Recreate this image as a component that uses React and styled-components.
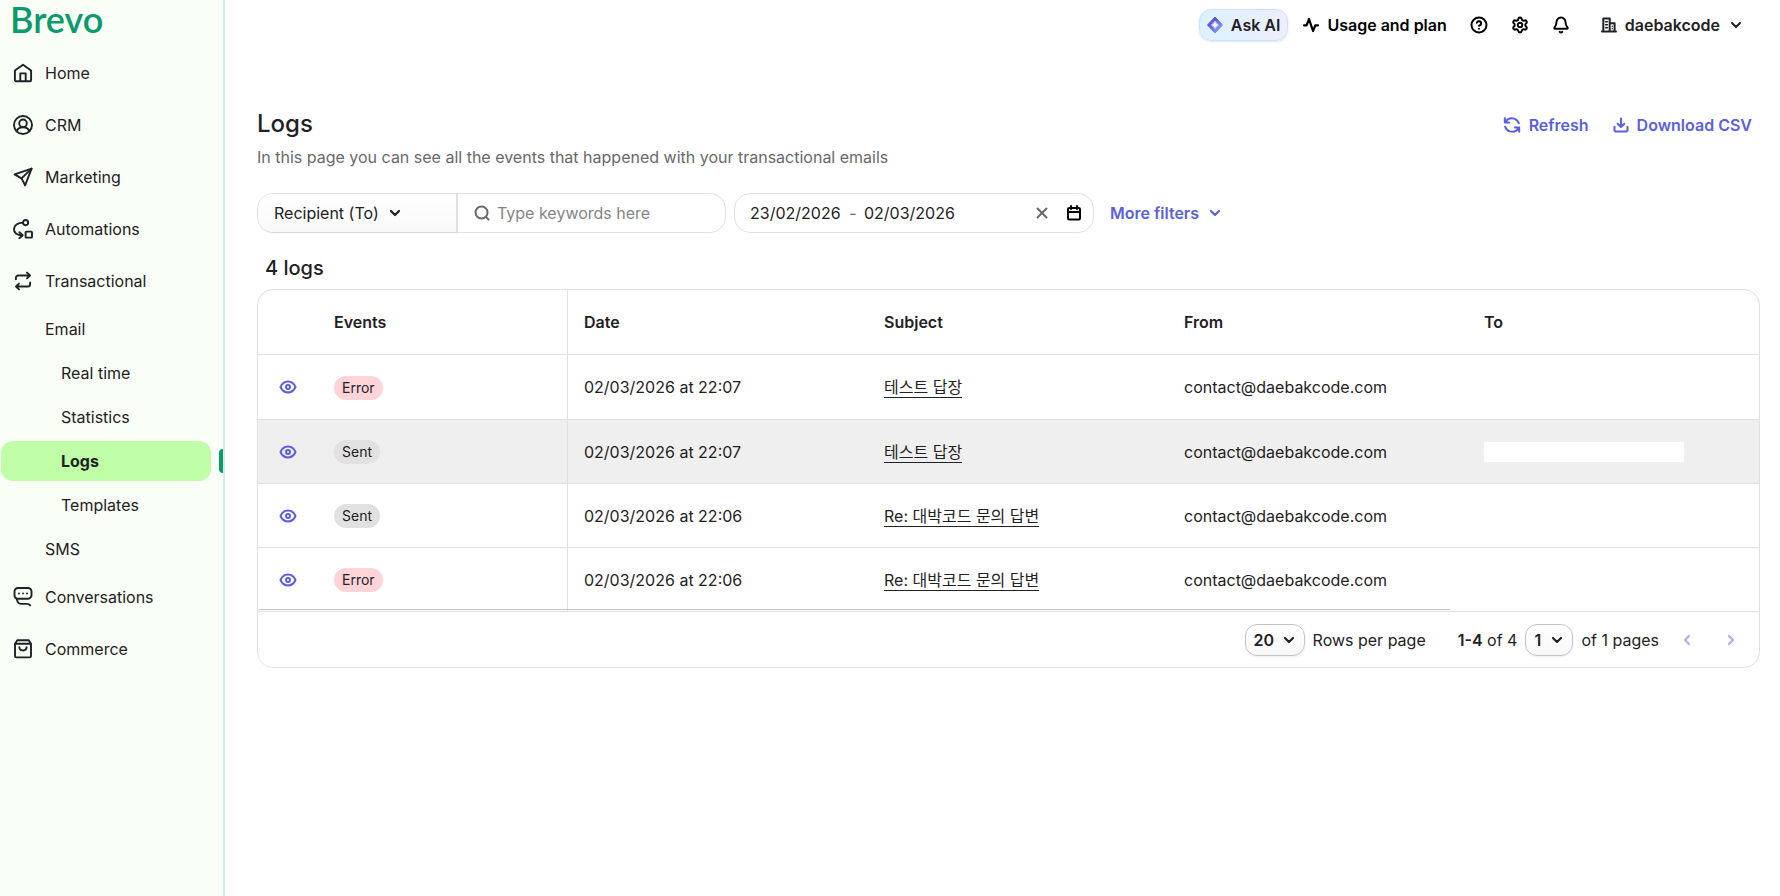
import React, { useState } from "react";
import styled, { createGlobalStyle, css } from "styled-components";
import { Bell, CircleHelp, Settings } from "lucide-react";

const GlobalStyle = createGlobalStyle`
  *, *::before, *::after {
    box-sizing: border-box;
  }
  body {
    margin: 0;
    background: #ffffff;
    color: #1f2124;
    font-family: "Inter", "Noto Sans CJK KR", sans-serif;
    font-size: 16px;
    line-height: 24px;
  }
  button, input, select {
    font: inherit;
    color: inherit;
  }
  svg {
    display: block;
    flex-shrink: 0;
  }
`;

/* ---------- icons ---------- */

const Stroke = ({ children, size = 20, width = 1.9 }) => (
  <svg
    width={size}
    height={size}
    viewBox={`0 0 ${size} ${size}`}
    fill="none"
    stroke="currentColor"
    strokeWidth={width}
    strokeLinecap="round"
    strokeLinejoin="round"
    aria-hidden="true"
  >
    {children}
  </svg>
);

const HomeIcon = () => (
  <Stroke>
    <path d="M1.9 7.6 10 1.8l8.1 5.8v9.3a1.3 1.3 0 0 1-1.3 1.3H3.2a1.3 1.3 0 0 1-1.3-1.3z" />
    <path d="M7.3 18v-7.6h5.4V18" />
  </Stroke>
);

const CrmIcon = () => (
  <Stroke>
    <circle cx="10" cy="10" r="9" />
    <circle cx="10" cy="8.3" r="3.8" />
    <path d="M3.6 16.2c1-2.6 3.4-4 6.4-4s5.4 1.4 6.4 4" />
  </Stroke>
);

const MarketingIcon = () => (
  <Stroke>
    <path d="M18.6 1.6 1.6 7.4l6.9 4 3.6 6.9z" />
    <path d="M18.6 1.6 8.5 11.4" />
  </Stroke>
);

const AutomationIcon = () => (
  <Stroke>
    <circle cx="12.6" cy="3.6" r="2.6" />
    <path d="M10 3.6C4.6 3.6 1 6.3 1 10.2c0 3.7 3.2 6 8.4 6" />
    <path d="m6.4 13.2 3.2 3-3.2 3" />
    <rect x="12.6" y="12.6" width="6.4" height="6" rx="0.6" />
  </Stroke>
);

const TransactionalIcon = () => (
  <Stroke>
    <path d="M2.9 8.2V6.8a2.3 2.3 0 0 1 2.3-2.3h11.6M14 1.6l3 2.9-3 2.9" />
    <path d="M17.1 11.4v1.8a2.3 2.3 0 0 1-2.3 2.3H3.2M6 12.6l-3 2.9 3 2.9" />
  </Stroke>
);

const ConversationIcon = () => (
  <Stroke>
    <path d="M5 1h10a3.5 3.5 0 0 1 3.5 3.5v3.7a3.5 3.5 0 0 1-3.5 3.5H5a3.5 3.5 0 0 1-3.5-3.5V4.5A3.5 3.5 0 0 1 5 1z" />
    <path d="M2.6 10.8c1.8.8 1.4 2.8 2.2 4.3.7 1.3 1.9 1.8 3.4 1.8h5.6c1.6 0 2.6.4 3.4 1.4" />
    <path d="M6 6.5h.01M10 6.5h.01M14 6.5h.01" />
  </Stroke>
);

const CommerceIcon = () => (
  <Stroke>
    <path d="M2 4.9 4.2 1.3h11.6L18 4.9v12a1.5 1.5 0 0 1-1.5 1.5h-13A1.5 1.5 0 0 1 2 16.9z" />
    <path d="M2.3 4.7h15.4M6.4 8.3c0 4.2 7.2 4.2 7.2 0" />
  </Stroke>
);

const PulseIcon = () => (
  <Stroke size={16} width={2.2}>
    <path d="M1 8.3h2.6L6 2l4 12 2.3-5.7H15" />
  </Stroke>
);

const BuildingIcon = () => (
  <Stroke size={16} width={2}>
    <path d="M1 14.5h14M2.3 14.5v-13h6.4v13M8.7 6.2h4.9v8.3" />
    <path d="M4.5 4.7h2M4.5 7.7h2M4.5 10.7h2M11.2 9.2v.01M11.2 11.7v.01" strokeWidth="1.4" />
  </Stroke>
);

const DiamondIcon = () => (
  <svg width="16" height="18" viewBox="0 0 16 18" aria-hidden="true">
    <defs>
      <linearGradient id="spark" x1="0" y1="0" x2="1" y2="1">
        <stop offset="0.3" stopColor="#5a54d6" />
        <stop offset="1" stopColor="#86b6fa" />
      </linearGradient>
    </defs>
    <path d="M8 1 15.5 9 8 17 .5 9z" fill="url(#spark)" stroke="url(#spark)" strokeLinejoin="round" />
    <path d="M8 4.6 12.2 9 8 13.4 3.8 9z" fill="#b9b6f5" />
    <path d="M8 6Q8.8 8.2 11 9 8.8 9.8 8 12 7.2 9.8 5 9 7.2 8.2 8 6z" fill="#ffffff" />
  </svg>
);

const Chevron = ({ width = 2.2 }) => (
  <Stroke size={12} width={width}>
    <path d="m2 4 4 4 4-4" />
  </Stroke>
);

const RefreshIcon = () => (
  <Stroke size={18} width={2}>
    <path d="M1.8 2.3v4.3h4.3M2.1 6.3C4 3.1 7.5 1.7 11 2.6c2.3.7 4 2.3 4.8 4.6" />
    <path d="M16.2 15.7v-4.3h-4.3M15.9 11.7c-1.9 3.2-5.4 4.6-8.9 3.7-2.3-.7-4-2.3-4.8-4.6" />
  </Stroke>
);

const DownloadIcon = () => (
  <Stroke size={16} width={2}>
    <path d="M8 1.5v8.3M4.7 6.7 8 10l3.3-3.3" />
    <path d="M1.5 9.8v3.4a1.3 1.3 0 0 0 1.3 1.3h10.4a1.3 1.3 0 0 0 1.3-1.3V9.8" />
  </Stroke>
);

const SearchIcon = () => (
  <Stroke size={16} width={2}>
    <circle cx="7.5" cy="7.5" r="6" />
    <path d="m12 12 2.6 2.6" />
  </Stroke>
);

const CloseIcon = () => (
  <Stroke size={12} width={2}>
    <path d="m1.5 1.5 9 9M10.5 1.5l-9 9" />
  </Stroke>
);

const CalendarIcon = () => (
  <Stroke size={16} width={2}>
    <rect x="2" y="3" width="12" height="11.5" rx="1.3" />
    <path d="M2 7h12M5 1v3M11 1v3" />
  </Stroke>
);

const EyeIcon = () => (
  <Stroke size={18} width={2}>
    <path d="M1.5 9C3 5.5 5.7 3.6 9 3.6S15 5.5 16.5 9C15 12.5 12.3 14.4 9 14.4S3 12.5 1.5 9z" />
    <circle cx="9" cy="9" r="2" />
  </Stroke>
);

const PageArrow = ({ next }) => (
  <Stroke size={12} width={2.2}>
    <path d={next ? "m4 2 4 4-4 4" : "M8 2 4 6l4 4"} />
  </Stroke>
);

/* ---------- data ---------- */

const NAV = [
  { label: "Home", icon: HomeIcon },
  { label: "CRM", icon: CrmIcon },
  { label: "Marketing", icon: MarketingIcon },
  { label: "Automations", icon: AutomationIcon },
  {
    label: "Transactional",
    icon: TransactionalIcon,
    children: [
      { label: "Email", level: 1 },
      { label: "Real time", level: 2 },
      { label: "Statistics", level: 2 },
      { label: "Logs", level: 2, active: true },
      { label: "Templates", level: 2 },
      { label: "SMS", level: 1 },
    ],
  },
  { label: "Conversations", icon: ConversationIcon },
  { label: "Commerce", icon: CommerceIcon },
];

const LOGS = [
  { id: 1, event: "Error", date: "02/03/2026 at 22:07", subject: "테스트 답장", from: "contact@daebakcode.com" },
  { id: 2, event: "Sent", date: "02/03/2026 at 22:07", subject: "테스트 답장", from: "contact@daebakcode.com", masked: true },
  { id: 3, event: "Sent", date: "02/03/2026 at 22:06", subject: "Re: 대박코드 문의 답변", from: "contact@daebakcode.com" },
  { id: 4, event: "Error", date: "02/03/2026 at 22:06", subject: "Re: 대박코드 문의 답변", from: "contact@daebakcode.com" },
];

/* ---------- page ---------- */

const Sidebar = () => (
  <Side>
    <Logo href="#home">Brevo</Logo>
    <nav aria-label="Main">
      <NavList>
        {NAV.map(({ label, icon: Icon, children }) => (
          <li key={label}>
            <NavLink href="#nav">
              <Icon />
              {label}
            </NavLink>
            {children && (
              <NavList>
                {children.map((item) => (
                  <SubItem key={item.label} $active={item.active}>
                    <SubLink
                      href="#nav"
                      $level={item.level}
                      $active={item.active}
                      aria-current={item.active ? "page" : undefined}
                    >
                      {item.label}
                    </SubLink>
                  </SubItem>
                ))}
              </NavList>
            )}
          </li>
        ))}
      </NavList>
    </nav>
  </Side>
);

const Header = () => (
  <Topbar>
    <AskButton type="button">
      <DiamondIcon />
      Ask AI
    </AskButton>
    <UsageButton type="button">
      <PulseIcon />
      Usage and plan
    </UsageButton>
    <IconGroup>
      <PlainButton type="button" aria-label="Help">
        <CircleHelp size={18} strokeWidth={2.6} />
      </PlainButton>
      <PlainButton type="button" aria-label="Settings">
        <Settings size={18} strokeWidth={2.6} />
      </PlainButton>
      <PlainButton type="button" aria-label="Notifications">
        <Bell size={18} strokeWidth={2.6} />
      </PlainButton>
    </IconGroup>
    <AccountButton type="button">
      <BuildingIcon />
      daebakcode
      <Chevron width={2} />
    </AccountButton>
  </Topbar>
);

const Filters = () => {
  const [keyword, setKeyword] = useState("");
  const [start, setStart] = useState("23/02/2026");
  const [end, setEnd] = useState("02/03/2026");

  const clearDates = () => {
    setStart("");
    setEnd("");
  };

  return (
    <FilterBar>
      <SearchGroup>
        <FieldButton type="button">
          Recipient (To)
          <Chevron />
        </FieldButton>
        <SearchBox>
          <SearchIcon />
          <input
            type="text"
            aria-label="Keywords"
            placeholder="Type keywords here"
            value={keyword}
            onChange={(e) => setKeyword(e.target.value)}
          />
        </SearchBox>
      </SearchGroup>
      <DateBox>
        <DateInput aria-label="Start date" value={start} onChange={(e) => setStart(e.target.value)} />
        <Dash>-</Dash>
        <DateInput aria-label="End date" value={end} onChange={(e) => setEnd(e.target.value)} />
        <DateActions>
          <PlainButton type="button" aria-label="Clear dates" onClick={clearDates} $muted>
            <CloseIcon />
          </PlainButton>
          <PlainButton type="button" aria-label="Open calendar">
            <CalendarIcon />
          </PlainButton>
        </DateActions>
      </DateBox>
      <LinkButton type="button" $gap={10}>
        More filters
        <Chevron />
      </LinkButton>
    </FilterBar>
  );
};

const Pagination = () => {
  const [rows, setRows] = useState("20");
  const [page, setPage] = useState("1");

  return (
    <Pager>
      <SelectBox $width={60}>
        <select id="rows" value={rows} onChange={(e) => setRows(e.target.value)}>
          <option>20</option>
          <option>50</option>
        </select>
        <Chevron />
      </SelectBox>
      <RowsLabel htmlFor="rows">Rows per page</RowsLabel>
      <span>
        <b>1-4</b> of 4
      </span>
      <SelectBox $width={48}>
        <select id="page" value={page} onChange={(e) => setPage(e.target.value)}>
          <option>1</option>
        </select>
        <Chevron />
      </SelectBox>
      <PageLabel htmlFor="page">of 1 pages</PageLabel>
      <ArrowButton type="button" aria-label="Previous page" disabled>
        <PageArrow />
      </ArrowButton>
      <ArrowButton type="button" aria-label="Next page" disabled>
        <PageArrow next />
      </ArrowButton>
    </Pager>
  );
};

const LogTable = () => (
  <Card>
    <TableWrap>
      <Table>
        <colgroup>
          <col width="60" />
          <col width="250" />
          <col width="300" />
          <col width="300" />
          <col width="300" />
          <col />
        </colgroup>
        <thead>
          <tr>
            <th aria-label="Details" />
            <th>Events</th>
            <th>Date</th>
            <th>Subject</th>
            <th>From</th>
            <th>To</th>
          </tr>
        </thead>
        <tbody>
          {LOGS.map((log) => (
            <Row key={log.id} $hovered={log.masked}>
              <td>
                <ViewButton type="button" aria-label="View log">
                  <EyeIcon />
                </ViewButton>
              </td>
              <td>
                <Badge $error={log.event === "Error"}>{log.event}</Badge>
              </td>
              <td>{log.date}</td>
              <td>
                <SubjectLink href="#log">{log.subject}</SubjectLink>
              </td>
              <td>{log.from}</td>
              <td>{log.masked && <Mask />}</td>
            </Row>
          ))}
        </tbody>
      </Table>
      <ScrollThumb />
    </TableWrap>
    <Pagination />
  </Card>
);

const App = () => (
  <>
    <GlobalStyle />
    <Page>
      <Sidebar />
      <Content>
        <Header />
        <Main>
          <TitleRow>
            <div>
              <h1>Logs</h1>
              <p>In this page you can see all the events that happened with your transactional emails</p>
            </div>
            <TitleActions>
              <LinkButton type="button" $gap={8}>
                <RefreshIcon />
                Refresh
              </LinkButton>
              <LinkButton type="button" $gap={8}>
                <DownloadIcon />
                Download CSV
              </LinkButton>
            </TitleActions>
          </TitleRow>
          <Filters />
          <Count>4 logs</Count>
          <LogTable />
        </Main>
      </Content>
    </Page>
  </>
);

/* ---------- styles ---------- */

const Page = styled.div`
  display: flex;
  min-height: 100vh;
`;

const Side = styled.aside`
  width: 225px;
  flex-shrink: 0;
  background: #f9fff6;
  border-right: 2px solid #d5ede5;
`;

const Logo = styled.a`
  display: block;
  height: 47px;
  padding-left: 10px;
  color: #0b996e;
  font-family: "Lato", sans-serif;
  font-size: 36px;
  font-weight: 600;
  line-height: 38px;
  text-decoration: none;
`;

const NavList = styled.ul`
  margin: 0;
  padding: 0;
  list-style: none;
`;

const NavLink = styled.a`
  display: flex;
  align-items: center;
  gap: 12px;
  height: 52px;
  padding-left: 13px;
  color: inherit;
  text-decoration: none;
`;

const SubItem = styled.li`
  display: flex;
  align-items: center;
  justify-content: space-between;
  height: 44px;
  padding-left: 1px;

  ${(p) =>
    p.$active &&
    css`
      &::after {
        content: "";
        width: 4px;
        height: 24px;
        border-radius: 4px 0 0 4px;
        background: #0b996e;
      }
    `}
`;

const SubLink = styled.a`
  display: flex;
  align-items: center;
  width: 210px;
  height: 40px;
  padding-left: ${(p) => (p.$level === 2 ? 60 : 44)}px;
  border-radius: 12px;
  color: inherit;
  text-decoration: none;
  background: ${(p) => (p.$active ? "#c0ffa8" : "transparent")};
  font-weight: ${(p) => (p.$active ? 700 : 400)};
`;

const Content = styled.div`
  flex: 1;
  min-width: 0;
`;

const Topbar = styled.header`
  display: flex;
  align-items: center;
  justify-content: flex-end;
  height: 50px;
  padding-right: 38px;
`;

const PlainButton = styled.button`
  display: flex;
  align-items: center;
  padding: 0;
  border: none;
  background: none;
  cursor: pointer;
  color: ${(p) => (p.$muted ? "#696969" : "#000000")};
`;

const AskButton = styled(PlainButton)`
  gap: 8px;
  height: 32px;
  padding: 0 7px;
  border: 1px solid #cfe0f8;
  border-radius: 12px;
  background: linear-gradient(100deg, #dcf1ff, #eeeefc);
  box-shadow: 0 1px 2px rgba(80, 160, 230, 0.25);
  color: #1f2124;
  font-weight: 600;
`;

const UsageButton = styled(PlainButton)`
  gap: 8px;
  margin-left: 15px;
  font-weight: 600;
`;

const IconGroup = styled.div`
  display: flex;
  gap: 23px;
  margin: 0 31px 0 23px;
`;

const AccountButton = styled(PlainButton)`
  gap: 8px;
  color: #1f2124;
  font-weight: 600;

  svg:last-child {
    margin-left: 2px;
  }
`;

const Main = styled.main`
  padding: 56px 20px 32px 32px;
`;

const TitleRow = styled.div`
  display: flex;
  justify-content: space-between;

  h1 {
    margin: 0;
    font-size: 24px;
    font-weight: 500;
    line-height: 35px;
  }
  p {
    margin: 4px 0 0;
    color: #696969;
  }
`;

const TitleActions = styled.div`
  display: flex;
  align-items: flex-start;
  gap: 24px;
  padding: 7px 8px 0 0;
`;

const LinkButton = styled.button`
  display: flex;
  align-items: center;
  gap: ${(p) => p.$gap}px;
  padding: 0;
  border: none;
  background: none;
  color: #5c5fda;
  font-weight: 600;
  cursor: pointer;
`;

const FilterBar = styled.div`
  display: flex;
  gap: 8px;
  margin-top: 24px;

  > button {
    margin-left: 8px;
  }
`;

const SearchGroup = styled.div`
  display: flex;
  width: 469px;
  height: 40px;
  border: 1px solid #e1e1e1;
  border-radius: 16px;
`;

const FieldButton = styled.button`
  display: flex;
  align-items: center;
  gap: 10px;
  width: 200px;
  padding: 0 16px;
  border: none;
  border-right: 2px solid #e1e1e1;
  border-radius: 15px 0 0 15px;
  background: linear-gradient(#ffffff, #f9f9f9);
  box-shadow: 0 2px 2px rgba(0, 0, 0, 0.04);
  cursor: pointer;
`;

const SearchBox = styled.label`
  display: flex;
  align-items: center;
  gap: 7px;
  flex: 1;
  min-width: 0;
  padding: 0 16px;
  color: #696969;

  input {
    flex: 1;
    min-width: 0;
    padding: 0;
    border: none;
    outline: none;
    background: transparent;
    color: #1f2124;
  }
  input::placeholder {
    color: #858585;
    opacity: 1;
  }
`;

const DateBox = styled.div`
  display: flex;
  align-items: center;
  width: 360px;
  height: 40px;
  padding: 0 11px 0 15px;
  border: 1px solid #e1e1e1;
  border-radius: 16px;
`;

const DateInput = styled.input`
  width: 92px;
  padding: 0;
  border: none;
  outline: none;
  background: transparent;
`;

const Dash = styled.span`
  width: 22px;
  text-align: center;
  color: #696969;
`;

const DateActions = styled.div`
  display: flex;
  align-items: center;
  gap: 18px;
  margin-left: auto;
`;

const Count = styled.h2`
  margin: 20px 0 6px 8px;
  font-size: 20px;
  font-weight: 500;
  line-height: 30px;
`;

const Card = styled.section`
  border: 1px solid #e1e1e1;
  border-radius: 16px;
  overflow: hidden;
`;

const TableWrap = styled.div`
  position: relative;
`;

const Table = styled.table`
  width: 100%;
  table-layout: fixed;
  border-collapse: separate;
  border-spacing: 0;

  th,
  td {
    height: 64px;
    padding: 0 16px;
    border-bottom: 1px solid #e1e1e1;
    text-align: left;
    white-space: nowrap;
  }
  th,
  tbody tr:first-child td {
    height: 65px;
  }
  th {
    font-weight: 600;
  }
  th:nth-child(2),
  td:nth-child(2) {
    border-right: 1px solid #e1e1e1;
  }
  tr > :first-child {
    padding: 0 21px;
  }
`;

const Row = styled.tr`
  background: ${(p) => (p.$hovered ? "#efefef" : "#ffffff")};
`;

const ViewButton = styled(PlainButton)`
  color: #5c5fda;
`;

const Badge = styled.span`
  display: inline-block;
  padding: 0 8px;
  border-radius: 12px;
  background: ${(p) => (p.$error ? "#ffd4d9" : "#e1e1e1")};
  font-size: 14px;
  line-height: 24px;
`;

const SubjectLink = styled.a`
  color: inherit;
  text-decoration: none;
  border-bottom: 1px solid #1f2124;
`;

const Mask = styled.div`
  width: 200px;
  height: 20px;
  background: #ffffff;
`;

const ScrollThumb = styled.div`
  position: absolute;
  bottom: 2px;
  left: 1px;
  width: calc(80% - 10px);
  height: 1px;
  background: #c4c4c4;
`;

const Pager = styled.div`
  display: flex;
  align-items: center;
  justify-content: flex-end;
  height: 55px;
  padding-right: 6px;

  b {
    font-weight: 600;
  }
`;

const SelectBox = styled.div`
  display: grid;
  align-items: center;
  width: ${(p) => p.$width}px;
  margin: 0 8px;

  select {
    grid-area: 1 / 1;
    appearance: none;
    height: 32px;
    padding: 0 8px;
    border: 1px solid #c4c4c4;
    border-radius: 12px;
    background: linear-gradient(#ffffff, #f8f8f8);
    box-shadow: 0 1px 2px rgba(0, 0, 0, 0.08);
    font-weight: 600;
  }
  svg {
    grid-area: 1 / 1;
    justify-self: end;
    margin-right: 10px;
    pointer-events: none;
  }
`;

const RowsLabel = styled.label`
  margin-right: 32px;
`;

const PageLabel = styled.label`
  margin-right: 6px;
`;

const ArrowButton = styled.button`
  display: flex;
  align-items: center;
  justify-content: center;
  width: 44px;
  height: 32px;
  padding: 0;
  border: none;
  background: none;
  color: #aeaeec;
`;

export default App;
